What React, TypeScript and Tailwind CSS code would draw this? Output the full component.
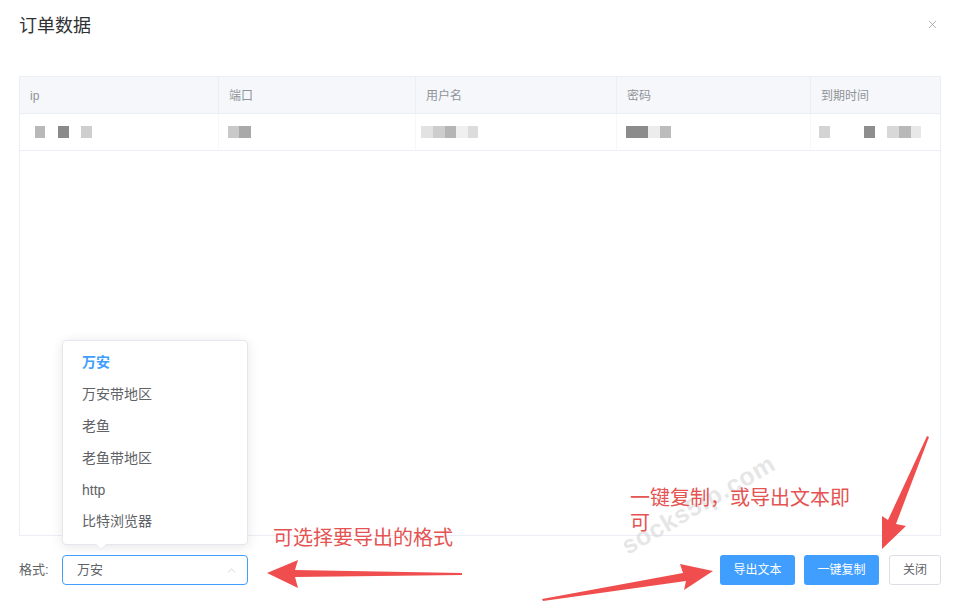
import { X, ChevronUp } from "lucide-react";

type Cell = [number, number, string];

const cols = ["ip", "端口", "用户名", "密码", "到期时间"];

// pixelated (masked) values in the single row
const blurred: Cell[][] = [
  [[15, 10, "#b8b8b8"], [13, 11, "#8a8a8a"], [12, 11, "#cfcfcf"]],
  [[9, 11, "#c9c9c9"], [0, 12, "#a9a9a9"]],
  [[5, 12, "#e2e2e2"], [0, 12, "#cdcdcd"], [0, 11, "#b5b5b5"], [0, 12, "#f0f0f0"], [0, 10, "#dcdcdc"]],
  [[9, 22, "#8c8c8c"], [0, 12, "#ececec"], [0, 11, "#bcbcbc"]],
  [[8, 11, "#d4d4d4"], [34, 11, "#8e8e8e"], [12, 12, "#d8d8d8"], [0, 12, "#b8b8b8"], [0, 10, "#e8e8e8"]],
];

const options = ["万安", "万安带地区", "老鱼", "老鱼带地区", "http", "比特浏览器"];

function Blur({ cells }: { cells: Cell[] }) {
  return (
    <div className="flex items-center">
      {cells.map(([gap, w, c], i) => (
        <div key={i} className="h-[12px]" style={{ marginLeft: gap, width: w, background: c }} />
      ))}
    </div>
  );
}

function Dropdown() {
  return (
    <div className="absolute left-[62px] top-[340px] w-[186px] rounded border border-[#e4e7ed] bg-white py-[6px] shadow-[0_2px_12px_0_rgba(0,0,0,0.1)]">
      {options.map((o, i) => (
        <div
          key={o}
          className={`h-[31.8px] pl-[19px] flex items-center text-[14px] ${
            i === 0 ? "text-[#409eff] font-bold" : "text-[#606266]"
          }`}
        >
          {o}
        </div>
      ))}
      <div className="absolute left-[32px] -bottom-[6px] w-0 h-0 border-x-[6px] border-x-transparent border-t-[6px] border-t-[#e4e7ed]" />
      <div className="absolute left-[33px] -bottom-[5px] w-0 h-0 border-x-[5px] border-x-transparent border-t-[5px] border-t-white" />
    </div>
  );
}

function Annotations() {
  return (
    <>
      <div className="absolute left-[612px] top-[486px] -rotate-[30deg] text-[25px] font-bold text-[#d6d6d6]/60 tracking-wide select-none">
        socks5ip.com
      </div>
      <div className="absolute left-[273px] top-[525px] text-[20px] leading-[26px] text-[#e55353]">
        可选择要导出的格式
      </div>
      <div className="absolute left-[630px] top-[486px] w-[222px] text-[20px] leading-[25px] text-[#e55353]">
        一键复制，或导出文本即可
      </div>
      <svg className="absolute inset-0 pointer-events-none" width="954" height="614">
        <g fill="#f04e4e">
          <polygon points="267,573 298,560 295,570 462,573 462,575 295,577 298,588" />
          <polygon points="713,571 680,564 683,573 542,599 543,601 686,581 684,590" />
          <polygon points="882,549 882,516 888,520 927,436 929,437 896,524 906,526" />
        </g>
      </svg>
    </>
  );
}

export default function App() {
  return (
    <div
      className="relative w-[954px] h-[614px] overflow-hidden bg-white"
      style={{ fontFamily: '"Liberation Sans", "Noto Sans CJK SC", sans-serif' }}
    >
      <div className="flex items-center justify-between h-[52px] pl-[19px] pr-[15px]">
        <span className="text-[18px] text-[#303133]">订单数据</span>
        <X size={13} strokeWidth={1.3} className="text-[#909399] -mt-[3px]" />
      </div>

      <div className="mt-[24px] ml-[19px] w-[922px] h-[460px] border border-[#ebeef5]">
        <div className="grid grid-cols-[199px_197px_201px_194px_1fr] bg-[#f5f7fa] h-[37px] border-b border-[#ebeef5] text-[12px] text-[#909399]">
          {cols.map((c, i) => (
            <div key={c} className={`flex items-center pl-[10px] pt-[1px] ${i < 4 ? "border-r border-[#ebeef5]" : ""}`}>
              {c}
            </div>
          ))}
        </div>
        <div className="grid grid-cols-[199px_197px_201px_194px_1fr] h-[37px] border-b border-[#ebeef5]">
          {blurred.map((b, i) => (
            <div key={i} className={`flex items-center ${i < 4 ? "border-r border-[#f6f7f9]" : ""}`}>
              <Blur cells={b} />
            </div>
          ))}
        </div>
      </div>

      <div className="flex items-center h-[30px] mt-[19px] pl-[19px] pr-[13px]">
        <span className="text-[13px] text-[#606266] w-[43px]">格式:</span>
        <div className="flex items-center justify-between w-[186px] h-[30px] rounded border border-[#409eff] pl-[14px] pr-[9px] text-[13px] text-[#606266]">
          <span>万安</span>
          <ChevronUp size={13} strokeWidth={1.3} className="text-[#c0c4cc]" />
        </div>
        <div className="flex-1" />
        <button className="w-[75px] h-[30px] rounded-[3px] bg-[#409eff] text-white text-[12px]">导出文本</button>
        <button className="ml-[9px] w-[75px] h-[30px] rounded-[3px] bg-[#409eff] text-white text-[12px]">一键复制</button>
        <button className="ml-[10px] w-[52px] h-[30px] rounded-[3px] border border-[#dcdfe6] bg-white text-[#606266] text-[12px]">关闭</button>
      </div>

      <Dropdown />
      <Annotations />
    </div>
  );
}
